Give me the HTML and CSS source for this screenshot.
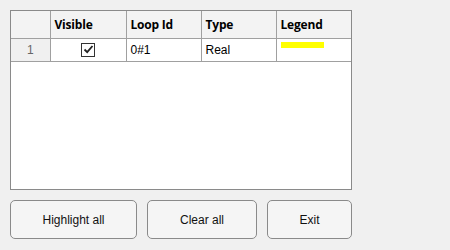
FILE: index.html
```html
<!DOCTYPE html>
<html lang="en">
<head>
    <meta charset="UTF-8">
    <title>Loops</title>
    <link rel="stylesheet" href="styles.css">
</head>
<body>
    <div class="panel">
        <div class="grid">
            <table class="loops">
                <thead>
                    <tr>
                        <th class="col-num"></th>
                        <th class="col-vis">Visible</th>
                        <th class="col-id">Loop Id</th>
                        <th class="col-type">Type</th>
                        <th class="col-legend">Legend</th>
                    </tr>
                </thead>
                <tbody>
                    <tr>
                        <td class="row-num">1</td>
                        <td class="center">
                            <span class="check">
                                <svg width="11" height="11" viewBox="0 0 11 11">
                                    <path d="M1.5 5.5 L4.2 8.2 L9.5 2" fill="none" stroke="#222" stroke-width="1.8"/>
                                </svg>
                            </span>
                        </td>
                        <td>0#1</td>
                        <td>Real</td>
                        <td class="legend-cell"><span class="legend" style="background:#ffff00"></span></td>
                    </tr>
                </tbody>
            </table>
        </div>
        <div class="button-group">
            <button class="btn btn-highlight">Highlight all</button>
            <button class="btn btn-clear">Clear all</button>
            <button class="btn btn-exit">Exit</button>
        </div>
    </div>
</body>
</html>
```

FILE: styles.css
```css
:root {
    --background-color: #f0f0f0;
    --line-color: #a0a0a0;
    --frame-color: #8a8a8a;
    --text-color: #000000;
}
* {
    margin: 0;
    padding: 0;
    box-sizing: border-box;
}
body {
    font-family: 'Liberation Sans', Arial, sans-serif;
    font-size: 12px;
    background-color: var(--background-color);
    color: var(--text-color);
    width: 450px;
    height: 250px;
    overflow: hidden;
}
.panel {
    padding: 10px;
    display: flex;
    flex-direction: column;
    gap: 10px;
    width: 362px;
}
.grid {
    width: 342px;
    height: 180px;
    background-color: #ffffff;
    border: 1px solid var(--frame-color);
    overflow: hidden;
}
.loops {
    border-collapse: collapse;
    table-layout: fixed;
    width: 340px;
}
.loops th {
    height: 27px;
    background-color: #f3f3f3;
    font-family: 'Open Sans', 'Noto Sans', sans-serif;
    font-weight: 700;
    font-size: 12px;
    letter-spacing: -0.2px;
    text-align: left;
    padding: 0 4px;
    border-right: 1px solid var(--line-color);
    border-bottom: 1px solid var(--line-color);
}
.loops td {
    height: 23px;
    padding: 0 4px;
    border-right: 1px solid var(--line-color);
    border-bottom: 1px solid var(--line-color);
    vertical-align: middle;
}
.loops th:last-child,
.loops td:last-child {
    border-right: none;
}
.col-num { width: 39px; }
.col-vis { width: 76px; }
.col-id { width: 75px; }
.col-type { width: 75px; }
.col-legend { width: 75px; }
.loops .row-num {
    background-color: #f0f0f0;
    color: #666666;
    text-align: center;
}
.loops .center {
    text-align: center;
}
.check {
    display: inline-flex;
    align-items: center;
    justify-content: center;
    width: 14px;
    height: 14px;
    border: 1px solid #333333;
    background-color: #ffffff;
    vertical-align: middle;
}
.loops .legend-cell {
    vertical-align: top;
    padding-top: 3px;
}
.legend {
    display: block;
    width: 43px;
    height: 6px;
}
.button-group {
    display: flex;
    gap: 10px;
}
.btn {
    height: 39px;
    background-color: #f5f5f5;
    border: 1px solid #8a8a8a;
    border-radius: 5px;
    font-family: 'Liberation Sans', Arial, sans-serif;
    font-size: 12px;
    color: #111111;
}
.btn-highlight { width: 127px; }
.btn-clear { width: 110px; }
.btn-exit { width: 85px; }
```
